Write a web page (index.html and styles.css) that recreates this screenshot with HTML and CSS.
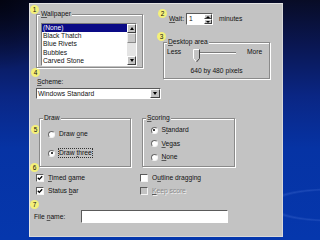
FILE: index.html
```html
<!DOCTYPE html>
<html lang="en">
<head>
<meta charset="UTF-8">
<meta name="viewport" content="width=device-width, initial-scale=1.0">
<title>Display Properties</title>
<link rel="stylesheet" href="styles.css">
</head>
<body>
  <div class="panel">
    <!-- numbered callouts -->
    <span class="badge b1">1</span>
    <span class="badge b2">2</span>
    <span class="badge b3">3</span>
    <span class="badge b4">4</span>
    <span class="badge b5">5</span>
    <span class="badge b6">6</span>
    <span class="badge b7">7</span>

    <div class="top-row">
      <div class="group wallpaper">
        <span class="group-title"><u>W</u>allpaper</span>
        <div class="listbox">
          <div class="list-items">
            <div class="item selected">(None)</div>
            <div class="item">Black Thatch</div>
            <div class="item">Blue Rivets</div>
            <div class="item">Bubbles</div>
            <div class="item">Carved Stone</div>
          </div>
          <div class="scrollbar">
            <div class="sb-btn"><span class="tri up"></span></div>
            <div class="sb-track"><div class="sb-thumb"></div></div>
            <div class="sb-btn"><span class="tri down"></span></div>
          </div>
        </div>
      </div>

      <div class="right-col">
        <div class="wait">
          <span class="wait-label"><u>W</u>ait:</span>
          <div class="spin">
            <span class="spin-value">1</span>
            <div class="spin-btns">
              <div class="spin-btn"><span class="tri up small"></span></div>
              <div class="spin-btn"><span class="tri down small"></span></div>
            </div>
          </div>
          <span class="minutes">minutes</span>
        </div>

        <div class="group desktop">
          <span class="group-title"><u>D</u>esktop area</span>
          <div class="slider">
            <span class="less">Less</span>
            <div class="track">
              <svg class="thumb" width="7" height="14" viewBox="0 0 7 14">
                <polygon points="0.5,0.5 6.5,0.5 6.5,9.5 3.5,13 0.5,9.5" fill="#c3c3c3"/>
                <polyline points="3.5,13 0.5,9.5 0.5,0.5 6.5,0.5" fill="none" stroke="#fff" stroke-width="1"/>
                <polyline points="6.5,0.5 6.5,9.5 3.5,13" fill="none" stroke="#404040" stroke-width="1"/>
              </svg>
            </div>
            <span class="more">More</span>
          </div>
          <div class="caption">640 by 480 pixels</div>
        </div>
      </div>
    </div>

    <div class="scheme-label"><u>S</u>cheme:</div>
    <div class="dropdown">
      <span class="dropdown-value">Windows Standard</span>
      <div class="dropdown-btn"><span class="tri down"></span></div>
    </div>

    <div class="groups-row">
      <div class="group draw">
        <span class="group-title">Draw</span>
        <div class="radios">
          <div class="radio"><span class="circle"></span><span>Draw <u>o</u>ne</span></div>
          <div class="radio"><span class="circle checked"></span><span class="focus">Draw <u>t</u>hree</span></div>
        </div>
      </div>
      <div class="group scoring">
        <span class="group-title"><u>S</u>coring</span>
        <div class="radios">
          <div class="radio"><span class="circle checked"></span><span>S<u>t</u>andard</span></div>
          <div class="radio"><span class="circle"></span><span><u>V</u>egas</span></div>
          <div class="radio"><span class="circle"></span><span><u>N</u>one</span></div>
        </div>
      </div>
    </div>

    <div class="checks">
      <div class="check"><span class="box"><svg width="6" height="6" viewBox="0 0 6 6"><path d="M0.8 2.8 L2.3 4.4 L5.2 1.2" fill="none" stroke="#000" stroke-width="1.3"/></svg></span><span><u>T</u>imed game</span></div>
      <div class="check"><span class="box"></span><span>O<u>u</u>tline dragging</span></div>
      <div class="check"><span class="box"><svg width="6" height="6" viewBox="0 0 6 6"><path d="M0.8 2.8 L2.3 4.4 L5.2 1.2" fill="none" stroke="#000" stroke-width="1.3"/></svg></span><span>Status <u>b</u>ar</span></div>
      <div class="check disabled"><span class="box"></span><span><u>K</u>eep score</span></div>
    </div>

    <div class="file-row">
      <span class="file-label">File <u>n</u>ame:</span>
      <div class="file-field"></div>
    </div>
  </div>
</body>
</html>
```

FILE: styles.css
```css
body {
  margin: 0;
  width: 320px;
  height: 240px;
  overflow: hidden;
  font-family: "Liberation Sans", Arial, sans-serif;
  font-size: 6.7px;
  line-height: 8px;
  color: #111;
  background:
    radial-gradient(ellipse 70px 18px at 330px 205px, transparent 78%, rgba(70, 110, 210, 0.35) 86%, transparent 94%),
    radial-gradient(circle at 0 0, rgba(0, 0, 8, 0.7), transparent 70px),
    linear-gradient(180deg, #080c26 0%, #0a1650 18%, #0a2684 40%, #0633a4 62%, #0537ad 100%);
}

u {
  text-decoration-color: rgba(0, 0, 0, 0.55);
  text-underline-offset: 1px;
}

.panel {
  position: relative;
  box-sizing: border-box;
  width: 254px;
  height: 234px;
  margin: 3px 0 0 29px;
  padding: 9px 0 0 6px;
  background: #c3c3c3;
  border: 1px solid #e4e4e4;
  border-right-color: #d8d8d8;
  border-bottom-color: #d8d8d8;
}

/* callout numbers */
.badge {
  position: absolute;
  width: 9px;
  height: 9px;
  border-radius: 50%;
  background: #f4f07a;
  font-size: 6.5px;
  line-height: 9px;
  text-align: center;
}

.b1 { left: 0px; top: 1px; }
.b2 { left: 128px; top: 5px; }
.b3 { left: 127px; top: 28px; }
.b4 { left: 1px; top: 64px; }
.b5 { left: 1px; top: 121px; }
.b6 { left: 0px; top: 159px; }
.b7 { left: 0px; top: 196px; }

/* group boxes */
.group {
  position: relative;
  box-sizing: border-box;
  border: 1px solid #8a8a8a;
  box-shadow: inset 1px 1px 0 #fff, 1px 1px 0 #fff;
}

.group-title {
  position: absolute;
  top: -5px;
  left: 3px;
  padding: 0 1px;
  background: #c3c3c3;
}

.tri {
  display: block;
  width: 0;
  height: 0;
  border-left: 2.5px solid transparent;
  border-right: 2.5px solid transparent;
}

.tri.up { border-bottom: 3px solid #000; }
.tri.down { border-top: 3px solid #000; }
.tri.small { border-left-width: 2px; border-right-width: 2px; }
.tri.up.small { border-bottom-width: 2px; }
.tri.down.small { border-top-width: 2px; }

/* top row */
.top-row {
  display: flex;
}

.wallpaper {
  width: 107px;
  height: 54px;
  margin-top: 1px;
  padding: 8px 0 0 4px;
}

.listbox {
  display: flex;
  box-sizing: border-box;
  width: 96px;
  height: 43px;
  background: #fff;
  border: 1px solid;
  border-color: #7a7a7a #fff #fff #7a7a7a;
}

.list-items {
  flex: 1;
}

.item {
  height: 8.2px;
  line-height: 8.2px;
  padding-left: 1px;
  white-space: nowrap;
}

.item.selected {
  background: #0a0a86;
  color: #fff;
}

.scrollbar {
  display: flex;
  flex-direction: column;
  width: 9px;
}

.sb-btn {
  display: flex;
  align-items: center;
  justify-content: center;
  box-sizing: border-box;
  height: 9px;
  background: #c3c3c3;
  border: 1px solid;
  border-color: #fff #404040 #404040 #fff;
}

.sb-track {
  flex: 1;
  background: #e4e4e4;
}

.sb-thumb {
  box-sizing: border-box;
  height: 10px;
  background: #c8c8c8;
  border: 1px solid;
  border-color: #f0f0f0 #8a8a8a #8a8a8a #f0f0f0;
}

.right-col {
  margin-left: 20px;
}

.wait {
  display: flex;
  align-items: center;
  height: 12px;
  margin-left: 6px;
}

.wait-label {
  width: 17px;
}

.spin {
  display: flex;
  box-sizing: border-box;
  width: 27px;
  height: 12px;
  background: #fff;
  border: 1px solid;
  border-color: #5a5a5a #fff #fff #5a5a5a;
}

.spin-value {
  flex: 1;
  padding-left: 2px;
  line-height: 10px;
}

.spin-btns {
  display: flex;
  flex-direction: column;
  width: 8px;
}

.spin-btn {
  display: flex;
  align-items: center;
  justify-content: center;
  box-sizing: border-box;
  height: 5px;
  background: #c3c3c3;
  border: 1px solid;
  border-color: #fff #404040 #404040 #fff;
}

.minutes {
  margin-left: 6px;
}

.desktop {
  width: 107px;
  height: 37px;
  margin-top: 17px;
  padding: 5px 0 0 3px;
}

.slider {
  display: flex;
  align-items: flex-start;
  height: 14px;
}

.less {
  width: 26px;
}

.track {
  position: relative;
  box-sizing: border-box;
  width: 43px;
  height: 2px;
  margin-top: 4px;
  border-top: 1px solid #7a7a7a;
  border-bottom: 1px solid #fff;
}

.thumb {
  position: absolute;
  left: 0;
  top: -4px;
}

.more {
  margin-left: 11px;
}

.caption {
  margin-top: 5px;
  margin-left: -3px;
  text-align: center;
}

/* scheme */
.scheme-label {
  margin: -1px 0 0 1px;
}

.dropdown {
  display: flex;
  align-items: center;
  box-sizing: border-box;
  width: 125px;
  height: 11px;
  margin-top: 2px;
  background: #fff;
  border: 1px solid;
  border-color: #5a5a5a #fff #fff #5a5a5a;
}

.dropdown-value {
  flex: 1;
  padding-left: 1px;
}

.dropdown-btn {
  display: flex;
  align-items: center;
  justify-content: center;
  box-sizing: border-box;
  width: 10px;
  height: 9px;
  background: #c3c3c3;
  border: 1px solid;
  border-color: #fff #404040 #404040 #fff;
}

/* draw / scoring */
.groups-row {
  display: flex;
  gap: 11px;
  margin: 19px 0 0 3px;
}

.draw {
  width: 92px;
  height: 49px;
  padding: 11px 0 0 8px;
}

.draw .radios {
  gap: 11px;
}

.scoring {
  width: 93px;
  height: 49px;
  padding: 7px 0 0 7.5px;
}

.scoring .radios {
  gap: 5.5px;
}

.radios {
  display: flex;
  flex-direction: column;
}

.radio {
  display: flex;
  align-items: center;
  gap: 4px;
  height: 8px;
}

.circle {
  position: relative;
  box-sizing: border-box;
  width: 7px;
  height: 7px;
  border-radius: 50%;
  background: #fff;
  border: 1px solid;
  border-color: #6a6a6a #f4f4f4 #f4f4f4 #6a6a6a;
}

.circle.checked::after {
  content: "";
  position: absolute;
  left: 1.5px;
  top: 1.5px;
  width: 2px;
  height: 2px;
  border-radius: 50%;
  background: #000;
}

.focus {
  outline: 1px dotted #333;
  outline-offset: 0;
}

/* check boxes */
.checks {
  display: grid;
  grid-template-columns: 104px auto;
  row-gap: 5px;
  margin-top: 7px;
}

.check {
  display: flex;
  align-items: center;
  gap: 4px;
  height: 8px;
}

.box {
  display: flex;
  align-items: center;
  justify-content: center;
  box-sizing: border-box;
  width: 8px;
  height: 8px;
  background: #fff;
  border: 1px solid;
  border-color: #5a5a5a #f4f4f4 #f4f4f4 #5a5a5a;
}

.check.disabled {
  color: #8a8a8a;
  text-shadow: 1px 1px 0 #f0f0f0;
}

.check.disabled .box {
  background: #c3c3c3;
}

/* file name */
.file-row {
  display: flex;
  align-items: center;
  height: 13px;
  margin: 15px 0 0 -2px;
}

.file-label {
  width: 47px;
}

.file-field {
  box-sizing: border-box;
  width: 147px;
  height: 13px;
  background: #fff;
  border: 1px solid;
  border-color: #5a5a5a #fff #fff #5a5a5a;
}
```
